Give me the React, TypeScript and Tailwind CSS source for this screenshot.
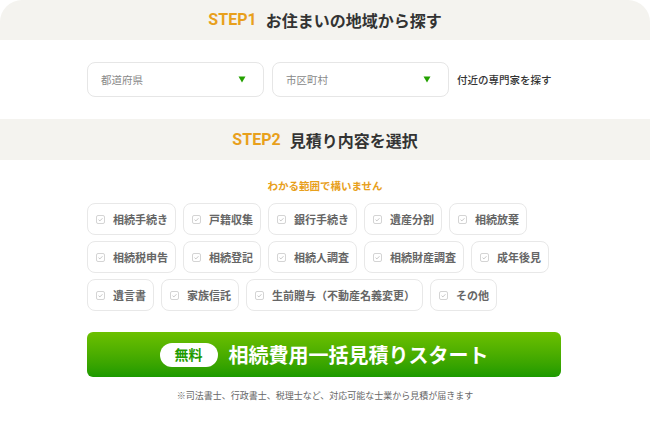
import React from "react";

const jp = { fontFamily: '"Noto Sans CJK JP", "Noto Sans", sans-serif' };
const step = { fontFamily: 'Roboto, "Noto Sans", sans-serif' };

const rows: string[] = [
  "相続手続き",
  "戸籍収集",
  "銀行手続き",
  "遺産分割",
  "相続放棄",
  "相続税申告",
  "相続登記",
  "相続人調査",
  "相続財産調査",
  "成年後見",
  "遺言書",
  "家族信託",
  "生前贈与（不動産名義変更）",
  "その他",
];

function Check() {
  return (
    <span className="flex h-[9px] w-[9px] shrink-0 items-center justify-center rounded-[2px] border border-[#d4d4d4] bg-white">
      <svg width="7" height="7" viewBox="0 0 8 8">
        <path d="M1.8 4.2 L3.3 5.6 L6.2 2.6" fill="none" stroke="#b5b5b5" strokeWidth="0.9" />
      </svg>
    </span>
  );
}

function Select({ label }: { label: string }) {
  return (
    <div className="flex h-[35px] w-[177px] items-center justify-between rounded-[8px] border border-[#e6e6e6] bg-white pl-[13px] pr-[17px]">
      <span className="text-[10.5px] text-[#888]">{label}</span>
      <svg width="8" height="7" viewBox="0 0 8 7">
        <path d="M0.5 0.5 H7.5 L4 6.5 Z" fill="#24a100" />
      </svg>
    </div>
  );
}

export default function App() {
  return (
    <div className="w-[650px] bg-white pb-[25px]" style={jp}>
      <div className="flex h-[40px] items-center justify-center gap-[9px] rounded-t-[22px] bg-[#f4f3ef]">
        <span className="text-[16px] font-bold text-[#e8a01c]" style={step}>
          STEP1
        </span>
        <span className="text-[16px] font-bold text-[#333]">お住まいの地域から探す</span>
      </div>

      <div className="ml-[87px] mt-[22px] flex w-[474px] items-center gap-[8px]">
        <Select label="都道府県" />
        <Select label="市区町村" />
        <span className="text-[10.5px] font-medium text-[#333]">付近の専門家を探す</span>
      </div>

      <div className="mt-[22px] flex h-[41px] items-center justify-center gap-[9px] bg-[#f4f3ef]">
        <span className="text-[16px] font-bold text-[#e8a01c]" style={step}>
          STEP2
        </span>
        <span className="text-[16px] font-bold text-[#333]">見積り内容を選択</span>
      </div>

      <div className="mt-[18px] text-center text-[10.5px] font-bold leading-[15px] text-[#e8a01c]">
        わかる範囲で構いません
      </div>

      <div className="ml-[87px] mt-[10px] w-[474px]">
        <div className="flex flex-wrap gap-x-[7px] gap-y-[6px]">
          {rows.map((r) => (
            <div
              key={r}
              className="flex h-[32px] items-center gap-[8px] rounded-[8px] border border-[#e8e8e8] bg-white pl-[8px] pr-[7px]"
            >
              <Check />
              <span className="text-[11px] font-bold text-[#666]">{r}</span>
            </div>
          ))}
        </div>

        <button className="mt-[21px] flex h-[45px] w-[474px] items-center justify-center gap-[11px] rounded-[6px] bg-linear-to-b from-[#6cc000] to-[#1b9a00]">
          <span className="flex h-[24px] w-[58px] items-center justify-center rounded-full bg-white text-[14px] font-bold text-[#1f9b00]">
            無料
          </span>
          <span className="text-[20px] font-bold text-white">相続費用一括見積りスタート</span>
        </button>
      </div>

      <div className="mt-[13px] text-center text-[9px] leading-[12px] text-[#666]">
        ※司法書士、行政書士、税理士など、対応可能な士業から見積が届きます
      </div>
    </div>
  );
}
